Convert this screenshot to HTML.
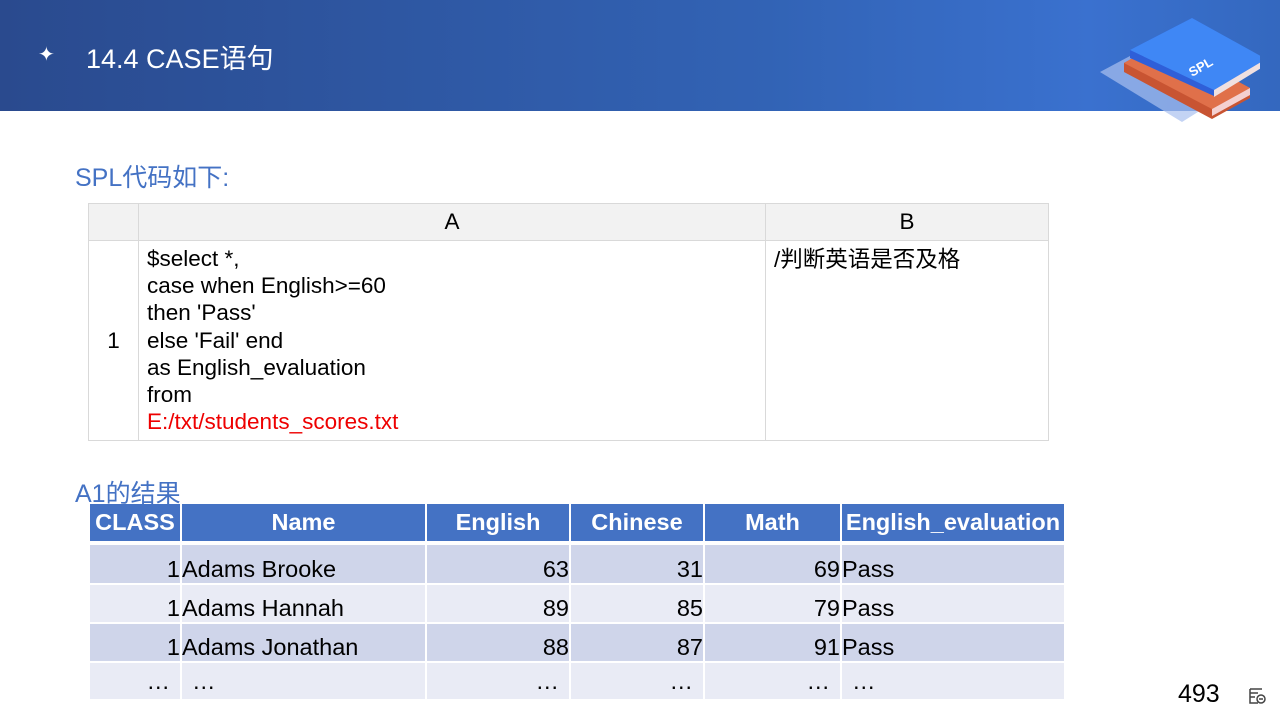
<!DOCTYPE html><html><head><meta charset="utf-8"><style>
body{margin:0;width:1280px;height:720px;position:relative;overflow:hidden;background:#fff;font-family:"Liberation Sans","Noto Sans CJK SC",sans-serif}
.hdr{position:absolute;left:0;top:0;width:1280px;height:111px;background:linear-gradient(90deg,#2a4a8e 0%,#3263b5 60%,#3a71cf 85%,#3468bf 100%)}
.abs{position:absolute}
table{border-collapse:collapse;position:absolute}
.code td{border:1px solid #d9d9d9;font-size:22.5px;color:#000}
.res td{font-size:23.5px;padding:0;border-left:2px solid #fff;border-right:1px solid #fff;white-space:nowrap}
</style></head><body>
<div class="hdr"></div>
<div class="abs" style="left:38px;top:42px;color:#fff;font-size:20px">✦</div>
<div class="abs" style="left:86px;top:37px;color:#fff;font-size:27px">14.4 CASE语句</div>
<svg class="abs" style="left:1100px;top:15px" width="160" height="110" viewBox="0 0 160 110">
<polygon points="0,57 45,33 125,80 82,107" fill="#aac0ef" opacity="0.7"/>
<polygon points="24,48 63,26 150,73 150,83 112,104 24,57" fill="#c85432"/>
<polygon points="24,48 63,26 150,73 112,94" fill="#e0704a"/>
<polygon points="112,94 150,73 150,80 112,101" fill="#f4d0d0"/>
<polygon points="30,35 92,3 165,44 114,81 30,43" fill="#2f5fd8"/>
<polygon points="30,35 92,3 166,44 114,75" fill="#3f87f5"/>
<polygon points="114,75 166,44 166,50 114,82" fill="#f0e0e0"/>
<text x="92" y="62" fill="#fff" font-size="13" font-weight="bold" transform="rotate(-30 92 62)" font-family="Liberation Sans">SPL</text>
</svg>
<div class="abs" style="left:75px;top:158px;color:#4472c4;font-size:25px">SPL代码如下:</div>
<table class="code" style="left:88px;top:203px;width:961px">
<tr style="height:37px;background:#f2f2f2"><td style="width:47px"></td><td style="width:624px;text-align:center">A</td><td style="text-align:center">B</td></tr>
<tr style="height:200px"><td style="text-align:center">1</td><td style="padding:4px 8px;line-height:27.2px;vertical-align:top">$select *,<br>case when English&gt;=60<br>then 'Pass'<br>else 'Fail' end<br>as English_evaluation<br>from<br><span style="color:#e00">E:/txt/students_scores.txt</span></td><td style="vertical-align:top;padding:4px 8px;line-height:30px">/判断英语是否及格</td></tr>
</table>
<div class="abs" style="left:75px;top:474px;color:#4472c4;font-size:25px">A1的结果</div>
<table class="res" style="left:88px;top:504px;width:977px">
<tr style="height:37px;background:#4472c4;color:#fff;font-weight:bold;text-align:center"><td style="width:90px">CLASS</td><td style="width:243px">Name</td><td style="width:142px">English</td><td style="width:132px">Chinese</td><td style="width:135px">Math</td><td>English_evaluation</td></tr>
<tr style="height:4px"><td colspan="6" style="border:0"></td></tr>
<tr style="height:39px;background:#cfd5ea;vertical-align:bottom"><td align="right">1</td><td>Adams Brooke</td><td align="right">63</td><td align="right">31</td><td align="right">69</td><td>Pass</td></tr>
<tr style="height:39px;background:#e9ebf5;vertical-align:bottom;border-top:2px solid #fff"><td align="right">1</td><td>Adams Hannah</td><td align="right">89</td><td align="right">85</td><td align="right">79</td><td>Pass</td></tr>
<tr style="height:39px;background:#cfd5ea;vertical-align:bottom;border-top:2px solid #fff"><td align="right">1</td><td>Adams Jonathan</td><td align="right">88</td><td align="right">87</td><td align="right">91</td><td>Pass</td></tr>
<tr style="height:37px;background:#e9ebf5;border-top:2px solid #fff"><td align="right" style="padding-right:10px">…</td><td style="padding-left:10px">…</td><td align="right" style="padding-right:10px">…</td><td align="right" style="padding-right:10px">…</td><td align="right" style="padding-right:10px">…</td><td style="padding-left:10px">…</td></tr>
</table>
<div class="abs" style="left:1178px;top:680px;font-size:25px;color:#000">493</div>
<svg class="abs" style="left:1247px;top:686px" width="20" height="20" viewBox="0 0 20 20" fill="none" stroke="#444" stroke-width="1.5"><path d="M3 3h12M3 7h8M3 11h5M3 3v14h8"/><circle cx="14" cy="13" r="4"/><path d="M12 13h4"/></svg>
</body></html>
